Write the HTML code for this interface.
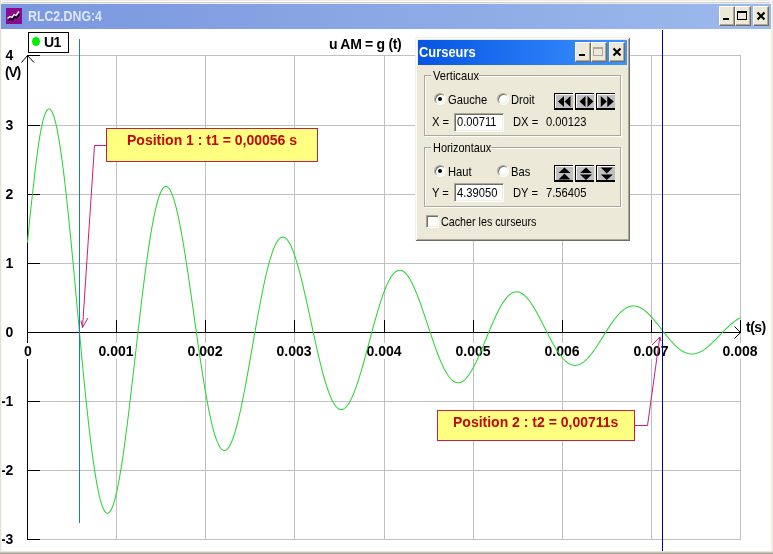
<!DOCTYPE html>
<html lang="fr">
<head>
<meta charset="utf-8">
<title>RLC2.DNG:4</title>
<style>
html,body{margin:0;padding:0;background:#fff;}
body{width:773px;height:554px;overflow:hidden;position:relative;font-family:"Liberation Sans",Arial,sans-serif;}
#win{position:absolute;left:0;top:0;width:773px;height:554px;background:#fff;overflow:hidden;will-change:transform;}
.abs{position:absolute;}
.plot{position:absolute;left:0;top:0;}
/* main window frame */
#bt0{left:0;top:0;width:773px;height:2px;background:linear-gradient(180deg,#ecebe3 50%,#fffffb 50%);}
#bt1{left:0;top:2px;width:773px;height:1px;background:#d6d1c5;}
#bt2{left:0;top:3px;width:773px;height:1px;background:#eaecf4;}
#bl{left:0;top:0;width:2px;height:554px;background:linear-gradient(90deg,#e2e0d6 50%,#f9f8f3 50%);}
#br{left:770px;top:0;width:3px;height:554px;background:linear-gradient(90deg,#fefefc 0,#fbfaf4 33%,#f7f5ec 34%,#f4f2e8 66%,#efecdf 67%,#ece9da 100%);}
#bb{left:0;top:551px;width:773px;height:3px;background:linear-gradient(180deg,#e8e6da 33.3%,#c6c3b5 33.3%,#c6c3b5 66.6%,#a9a698 66.6%);}
#tbar{left:1px;top:4px;width:770px;height:25px;background:linear-gradient(90deg,#7a96df,#9db9eb);}
#ticon{left:6px;top:8px;width:16px;height:16px;}
#ttext{left:28px;top:6px;font-weight:bold;font-size:14.5px;line-height:20px;color:#dfe8fb;white-space:nowrap;transform:scaleX(0.85);transform-origin:0 0;}
.cb{position:absolute;top:6px;width:16px;height:20px;background:#ece9d8;box-sizing:border-box;border:1px solid;border-color:#fff #716f64 #716f64 #fff;box-shadow:inset -1px -1px 0 #aca899;}
.cb svg{position:absolute;left:0;top:0;}
/* labels */
.yl{position:absolute;left:0;width:13px;text-align:right;font-weight:bold;font-size:14px;letter-spacing:-0.2px;line-height:15px;height:15px;color:#000;white-space:nowrap;}
.xl{position:absolute;top:343px;width:42px;height:16px;text-align:center;font-weight:bold;font-size:14px;line-height:16px;color:#000;white-space:nowrap;}
.xl span{background:#fff;}
.bl{position:absolute;font-weight:bold;font-size:14px;letter-spacing:-0.5px;line-height:15px;color:#000;white-space:nowrap;}
#legend{left:28px;top:32px;width:41px;height:21px;box-sizing:border-box;border:1px solid #000;background:#fff;}
#dot{left:32px;top:37px;width:8px;height:9px;border-radius:50%;background:#00f000;}
.note{position:absolute;box-sizing:border-box;border:1px solid #c02048;background:#ffff80;color:#c40808;font-weight:bold;font-size:14px;line-height:15px;white-space:nowrap;}
.note span{position:absolute;}
/* dialog */
#dlg{left:415px;top:37px;width:215px;height:204px;background:#ece9d8;box-shadow:inset 1px 1px 0 #f4f2e8,inset -1px -1px 0 #716f64,inset 2px 2px 0 #fff,inset -2px -2px 0 #aca899;font-size:11px;color:#000;}
#dlg .abs{white-space:nowrap;line-height:13px;}
#dlg .t{position:absolute;white-space:nowrap;font-size:13px;line-height:15px;transform:scaleX(0.86);transform-origin:0 0;}
#dtb{left:3px;top:3px;width:209px;height:25px;background:linear-gradient(90deg,#0654e3,#3d93ff);}
#dtt{left:4px;top:5px;color:#fff;font-weight:bold;font-size:14.5px;line-height:20px !important;transform:scaleX(0.89);transform-origin:0 0;}
.db{position:absolute;top:5px;width:16px;height:20px;background:#ece9d8;box-sizing:border-box;border:1px solid;border-color:#fff #716f64 #716f64 #fff;box-shadow:inset -1px -1px 0 #aca899;}
.db svg{position:absolute;left:0;top:0;}
.grp{position:absolute;box-sizing:border-box;border:1px solid #aca899;box-shadow:1px 1px 0 #fff,inset 1px 1px 0 #fff;}
.gl{position:absolute;background:#ece9d8;}
.radio{position:absolute;width:12px;height:12px;box-sizing:border-box;border-radius:50%;background:#fff;border:1px solid;border-color:#aca899 #fff #fff #aca899;box-shadow:inset 1px 1px 0 #716f64,inset -1px -1px 0 #f1efe2;}
.radio.on:after{content:"";position:absolute;left:3px;top:3px;width:4px;height:4px;border-radius:50%;background:#000;}
.inp{position:absolute;box-sizing:border-box;background:#fff;border:1px solid;border-color:#aca899 #fff #fff #aca899;box-shadow:inset 1px 1px 0 #716f64,inset -1px -1px 0 #f1efe2;}
.chk{position:absolute;width:13px;height:13px;box-sizing:border-box;background:#fff;border:1px solid;border-color:#aca899 #fff #fff #aca899;box-shadow:inset 1px 1px 0 #716f64,inset -1px -1px 0 #f1efe2;}
.ab{position:absolute;width:19px;height:17px;box-sizing:border-box;background:#c0c0c0;border-top:1px solid #000;border-left:1px solid #000;border-bottom:2px solid #000;box-shadow:inset 1px 1px 0 #fff;}
.ab svg{position:absolute;left:1px;top:1px;}
.ab path{fill:#000;}
</style>
</head>
<body>
<div id="win">
<svg class="plot" width="773" height="554" viewBox="0 0 773 554" shape-rendering="crispEdges">
<rect x="116" y="55" width="1" height="485" fill="#c0c0c0"/>
<rect x="205" y="55" width="1" height="485" fill="#c0c0c0"/>
<rect x="294" y="55" width="1" height="485" fill="#c0c0c0"/>
<rect x="384" y="55" width="1" height="485" fill="#c0c0c0"/>
<rect x="473" y="55" width="1" height="485" fill="#c0c0c0"/>
<rect x="562" y="55" width="1" height="485" fill="#c0c0c0"/>
<rect x="651" y="55" width="1" height="485" fill="#c0c0c0"/>
<rect x="740" y="55" width="1" height="485" fill="#c0c0c0"/>
<rect x="27" y="55" width="714" height="1" fill="#c0c0c0"/>
<rect x="27" y="125" width="714" height="1" fill="#c0c0c0"/>
<rect x="27" y="194" width="714" height="1" fill="#c0c0c0"/>
<rect x="27" y="263" width="714" height="1" fill="#c0c0c0"/>
<rect x="27" y="401" width="714" height="1" fill="#c0c0c0"/>
<rect x="27" y="470" width="714" height="1" fill="#c0c0c0"/>
<rect x="27" y="539" width="714" height="1" fill="#c0c0c0"/>
<rect x="27" y="55" width="1" height="485" fill="#000"/>
<rect x="27" y="332" width="714" height="1" fill="#000"/>
<rect x="27" y="55" width="13" height="1" fill="#000"/>
<rect x="27" y="125" width="13" height="1" fill="#000"/>
<rect x="27" y="194" width="13" height="1" fill="#000"/>
<rect x="27" y="263" width="13" height="1" fill="#000"/>
<rect x="27" y="332" width="13" height="1" fill="#000"/>
<rect x="27" y="401" width="13" height="1" fill="#000"/>
<rect x="27" y="470" width="13" height="1" fill="#000"/>
<rect x="27" y="539" width="13" height="1" fill="#000"/>
<rect x="116" y="320" width="1" height="13" fill="#000"/>
<rect x="205" y="320" width="1" height="13" fill="#000"/>
<rect x="294" y="320" width="1" height="13" fill="#000"/>
<rect x="384" y="320" width="1" height="13" fill="#000"/>
<rect x="473" y="320" width="1" height="13" fill="#000"/>
<rect x="562" y="320" width="1" height="13" fill="#000"/>
<rect x="651" y="320" width="1" height="13" fill="#000"/>
<rect x="740" y="320" width="1" height="13" fill="#000"/>
</svg>
<div class="yl" style="top:48px">4</div>
<div class="yl" style="top:118px">3</div>
<div class="yl" style="top:187px">2</div>
<div class="yl" style="top:256px">1</div>
<div class="yl" style="top:325px">0</div>
<div class="yl" style="top:394px">-1</div>
<div class="yl" style="top:463px">-2</div>
<div class="yl" style="top:532px">-3</div>
<div class="xl" style="left:7px"><span>0</span></div>
<div class="xl" style="left:95px"><span>0.001</span></div>
<div class="xl" style="left:184px"><span>0.002</span></div>
<div class="xl" style="left:273px"><span>0.003</span></div>
<div class="xl" style="left:363px"><span>0.004</span></div>
<div class="xl" style="left:452px"><span>0.005</span></div>
<div class="xl" style="left:541px"><span>0.006</span></div>
<div class="xl" style="left:630px"><span>0.007</span></div>
<div class="xl" style="left:719px"><span>0.008</span></div>
<div class="bl" style="left:5px;top:65px;letter-spacing:-1.2px">(V)</div>
<div class="bl" style="left:746px;top:320px">t(s)</div>
<div class="bl" style="left:329px;top:37px;letter-spacing:-0.3px">u AM = g (t)</div>
<svg class="plot" width="773" height="554" viewBox="0 0 773 554">
<path d="M21.5 62.5 L27.5 55.5 L34 62.5" fill="none" stroke="#000" stroke-width="1"/>
<path d="M734.5 326.5 L740.5 332.5 L734.5 338.5" fill="none" stroke="#000" stroke-width="1"/>
<polyline points="27.5,242.5 28.5,232.0 29.5,221.8 30.5,212.0 31.5,202.7 32.5,193.8 33.5,185.3 34.5,176.1 35.5,167.4 36.5,159.3 37.5,151.7 38.5,144.7 39.5,138.2 40.5,132.4 41.5,127.2 42.5,122.7 43.5,118.8 44.5,115.5 45.5,112.9 46.5,110.9 47.5,109.6 48.5,108.9 49.5,108.9 50.5,109.5 51.5,110.8 52.5,112.7 53.5,115.3 54.5,118.4 55.5,122.1 56.5,126.4 57.5,131.3 58.5,136.8 59.5,142.7 60.5,149.2 61.5,156.1 62.5,163.5 63.5,171.3 64.5,179.6 65.5,188.2 66.5,197.2 67.5,206.5 68.5,216.1 69.5,226.0 70.5,236.1 71.5,246.4 72.5,256.9 73.5,267.5 74.5,278.3 75.5,289.1 76.5,299.9 77.5,310.8 78.5,321.7 79.5,332.5 80.5,343.2 81.5,353.9 82.5,364.4 83.5,374.7 84.5,384.8 85.5,394.7 86.5,404.4 87.5,413.7 88.5,422.8 89.5,431.5 90.5,439.9 91.5,447.9 92.5,455.6 93.5,462.8 94.5,469.6 95.5,475.9 96.5,481.8 97.5,487.2 98.5,492.1 99.5,496.5 100.5,500.5 101.5,503.9 102.5,506.7 103.5,509.1 104.5,510.9 105.5,512.2 106.5,513.0 107.5,513.2 108.5,513.0 109.5,512.2 110.5,510.9 111.5,509.0 112.5,506.7 113.5,503.9 114.5,500.6 115.5,496.9 116.5,492.7 117.5,488.1 118.5,483.0 119.5,477.6 120.5,471.8 121.5,465.6 122.5,459.1 123.5,452.3 124.5,445.1 125.5,437.7 126.5,430.1 127.5,422.2 128.5,414.1 129.5,405.8 130.5,397.4 131.5,388.9 132.5,380.2 133.5,371.5 134.5,362.8 135.5,354.0 136.5,345.2 137.5,336.4 138.5,327.7 139.5,319.1 140.5,310.6 141.5,302.2 142.5,293.9 143.5,285.8 144.5,277.9 145.5,270.2 146.5,262.8 147.5,255.6 148.5,248.7 149.5,242.1 150.5,235.8 151.5,229.8 152.5,224.2 153.5,218.9 154.5,214.0 155.5,209.4 156.5,205.3 157.5,201.5 158.5,198.1 159.5,195.2 160.5,192.7 161.5,190.6 162.5,188.9 163.5,187.7 164.5,186.9 165.5,186.5 166.5,186.5 167.5,187.0 168.5,187.8 169.5,189.1 170.5,190.8 171.5,192.9 172.5,195.4 173.5,198.2 174.5,201.5 175.5,205.1 176.5,209.0 177.5,213.2 178.5,217.8 179.5,222.6 180.5,227.8 181.5,233.2 182.5,238.9 183.5,244.7 184.5,250.8 185.5,257.1 186.5,263.6 187.5,270.2 188.5,277.0 189.5,283.8 190.5,290.8 191.5,297.8 192.5,304.9 193.5,311.9 194.5,319.1 195.5,326.1 196.5,333.2 197.5,340.2 198.5,347.1 199.5,354.0 200.5,360.7 201.5,367.3 202.5,373.8 203.5,380.0 204.5,386.1 205.5,392.0 206.5,397.7 207.5,403.2 208.5,408.4 209.5,413.3 210.5,418.0 211.5,422.4 212.5,426.5 213.5,430.4 214.5,433.9 215.5,437.0 216.5,439.9 217.5,442.4 218.5,444.6 219.5,446.4 220.5,448.0 221.5,449.1 222.5,449.9 223.5,450.4 224.5,450.5 225.5,450.3 226.5,449.8 227.5,448.9 228.5,447.6 229.5,446.1 230.5,444.2 231.5,442.1 232.5,439.6 233.5,436.8 234.5,433.8 235.5,430.5 236.5,426.9 237.5,423.1 238.5,419.0 239.5,414.7 240.5,410.3 241.5,405.6 242.5,400.7 243.5,395.7 244.5,390.5 245.5,385.3 246.5,379.8 247.5,374.3 248.5,368.8 249.5,363.1 250.5,357.4 251.5,351.7 252.5,345.9 253.5,340.2 254.5,334.5 255.5,328.8 256.5,323.2 257.5,317.6 258.5,312.1 259.5,306.8 260.5,301.5 261.5,296.4 262.5,291.4 263.5,286.5 264.5,281.8 265.5,277.3 266.5,273.0 267.5,268.9 268.5,265.1 269.5,261.4 270.5,258.0 271.5,254.8 272.5,251.8 273.5,249.2 274.5,246.7 275.5,244.6 276.5,242.7 277.5,241.1 278.5,239.7 279.5,238.7 280.5,237.9 281.5,237.4 282.5,237.1 283.5,237.2 284.5,237.5 285.5,238.1 286.5,239.0 287.5,240.1 288.5,241.5 289.5,243.1 290.5,245.0 291.5,247.2 292.5,249.5 293.5,252.1 294.5,254.9 295.5,257.9 296.5,261.1 297.5,264.5 298.5,268.0 299.5,271.7 300.5,275.6 301.5,279.6 302.5,283.7 303.5,287.9 304.5,292.3 305.5,296.7 306.5,301.2 307.5,305.7 308.5,310.3 309.5,314.9 310.5,319.5 311.5,324.2 312.5,328.8 313.5,333.4 314.5,338.0 315.5,342.5 316.5,347.0 317.5,351.4 318.5,355.7 319.5,359.9 320.5,363.9 321.5,367.9 322.5,371.8 323.5,375.5 324.5,379.0 325.5,382.4 326.5,385.6 327.5,388.6 328.5,391.5 329.5,394.2 330.5,396.6 331.5,398.9 332.5,401.0 333.5,402.8 334.5,404.4 335.5,405.8 336.5,407.0 337.5,408.0 338.5,408.7 339.5,409.2 340.5,409.5 341.5,409.6 342.5,409.4 343.5,409.0 344.5,408.4 345.5,407.6 346.5,406.6 347.5,405.3 348.5,403.9 349.5,402.3 350.5,400.4 351.5,398.4 352.5,396.2 353.5,393.9 354.5,391.4 355.5,388.7 356.5,385.9 357.5,383.0 358.5,379.9 359.5,376.7 360.5,373.4 361.5,370.1 362.5,366.6 363.5,363.1 364.5,359.5 365.5,355.8 366.5,352.1 367.5,348.4 368.5,344.7 369.5,340.9 370.5,337.2 371.5,333.4 372.5,329.7 373.5,326.0 374.5,322.4 375.5,318.8 376.5,315.3 377.5,311.9 378.5,308.6 379.5,305.3 380.5,302.2 381.5,299.1 382.5,296.2 383.5,293.4 384.5,290.7 385.5,288.2 386.5,285.8 387.5,283.6 388.5,281.5 389.5,279.6 390.5,277.9 391.5,276.3 392.5,274.9 393.5,273.7 394.5,272.7 395.5,271.8 396.5,271.2 397.5,270.7 398.5,270.4 399.5,270.2 400.5,270.3 401.5,270.5 402.5,270.9 403.5,271.5 404.5,272.3 405.5,273.2 406.5,274.3 407.5,275.5 408.5,276.9 409.5,278.5 410.5,280.2 411.5,282.0 412.5,284.0 413.5,286.1 414.5,288.3 415.5,290.6 416.5,293.1 417.5,295.6 418.5,298.2 419.5,300.9 420.5,303.7 421.5,306.5 422.5,309.4 423.5,312.3 424.5,315.3 425.5,318.3 426.5,321.3 427.5,324.3 428.5,327.4 429.5,330.4 430.5,333.4 431.5,336.4 432.5,339.3 433.5,342.2 434.5,345.1 435.5,347.9 436.5,350.6 437.5,353.3 438.5,355.9 439.5,358.4 440.5,360.8 441.5,363.1 442.5,365.3 443.5,367.4 444.5,369.4 445.5,371.2 446.5,372.9 447.5,374.5 448.5,376.0 449.5,377.3 450.5,378.5 451.5,379.6 452.5,380.5 453.5,381.2 454.5,381.8 455.5,382.3 456.5,382.6 457.5,382.8 458.5,382.8 459.5,382.7 460.5,382.4 461.5,382.0 462.5,381.5 463.5,380.8 464.5,380.0 465.5,379.0 466.5,377.9 467.5,376.7 468.5,375.4 469.5,374.0 470.5,372.4 471.5,370.8 472.5,369.0 473.5,367.2 474.5,365.3 475.5,363.3 476.5,361.2 477.5,359.0 478.5,356.8 479.5,354.5 480.5,352.2 481.5,349.9 482.5,347.5 483.5,345.1 484.5,342.6 485.5,340.2 486.5,337.7 487.5,335.3 488.5,332.9 489.5,330.4 490.5,328.0 491.5,325.7 492.5,323.4 493.5,321.1 494.5,318.8 495.5,316.7 496.5,314.5 497.5,312.5 498.5,310.5 499.5,308.6 500.5,306.8 501.5,305.1 502.5,303.4 503.5,301.9 504.5,300.4 505.5,299.1 506.5,297.9 507.5,296.7 508.5,295.7 509.5,294.8 510.5,294.1 511.5,293.4 512.5,292.8 513.5,292.4 514.5,292.1 515.5,291.9 516.5,291.8 517.5,291.9 518.5,292.0 519.5,292.3 520.5,292.7 521.5,293.2 522.5,293.8 523.5,294.6 524.5,295.4 525.5,296.3 526.5,297.3 527.5,298.4 528.5,299.7 529.5,301.0 530.5,302.3 531.5,303.8 532.5,305.3 533.5,306.9 534.5,308.6 535.5,310.3 536.5,312.0 537.5,313.9 538.5,315.7 539.5,317.6 540.5,319.5 541.5,321.5 542.5,323.4 543.5,325.4 544.5,327.4 545.5,329.3 546.5,331.3 547.5,333.3 548.5,335.2 549.5,337.2 550.5,339.0 551.5,340.9 552.5,342.7 553.5,344.5 554.5,346.3 555.5,347.9 556.5,349.6 557.5,351.1 558.5,352.6 559.5,354.1 560.5,355.4 561.5,356.7 562.5,357.9 563.5,359.0 564.5,360.0 565.5,361.0 566.5,361.9 567.5,362.6 568.5,363.3 569.5,363.9 570.5,364.4 571.5,364.8 572.5,365.0 573.5,365.2 574.5,365.3 575.5,365.4 576.5,365.3 577.5,365.1 578.5,364.8 579.5,364.4 580.5,364.0 581.5,363.4 582.5,362.8 583.5,362.1 584.5,361.3 585.5,360.4 586.5,359.5 587.5,358.5 588.5,357.4 589.5,356.2 590.5,355.0 591.5,353.8 592.5,352.4 593.5,351.1 594.5,349.7 595.5,348.2 596.5,346.7 597.5,345.2 598.5,343.7 599.5,342.1 600.5,340.5 601.5,339.0 602.5,337.4 603.5,335.8 604.5,334.2 605.5,332.6 606.5,331.0 607.5,329.4 608.5,327.9 609.5,326.4 610.5,324.9 611.5,323.4 612.5,322.0 613.5,320.6 614.5,319.3 615.5,318.0 616.5,316.8 617.5,315.6 618.5,314.5 619.5,313.4 620.5,312.4 621.5,311.5 622.5,310.6 623.5,309.8 624.5,309.1 625.5,308.4 626.5,307.8 627.5,307.3 628.5,306.9 629.5,306.6 630.5,306.3 631.5,306.1 632.5,306.0 633.5,305.9 634.5,306.0 635.5,306.1 636.5,306.3 637.5,306.5 638.5,306.9 639.5,307.3 640.5,307.8 641.5,308.3 642.5,308.9 643.5,309.6 644.5,310.3 645.5,311.1 646.5,312.0 647.5,312.9 648.5,313.8 649.5,314.9 650.5,315.9 651.5,317.0 652.5,318.1 653.5,319.3 654.5,320.4 655.5,321.7 656.5,322.9 657.5,324.2 658.5,325.4 659.5,326.7 660.5,328.0 661.5,329.3 662.5,330.6 663.5,331.9 664.5,333.1 665.5,334.4 666.5,335.7 667.5,336.9 668.5,338.1 669.5,339.3 670.5,340.5 671.5,341.6 672.5,342.7 673.5,343.7 674.5,344.8 675.5,345.7 676.5,346.7 677.5,347.5 678.5,348.4 679.5,349.2 680.5,349.9 681.5,350.6 682.5,351.2 683.5,351.7 684.5,352.2 685.5,352.7 686.5,353.0 687.5,353.3 688.5,353.6 689.5,353.8 690.5,353.9 691.5,354.0 692.5,354.0 693.5,353.9 694.5,353.8 695.5,353.6 696.5,353.3 697.5,353.0 698.5,352.7 699.5,352.2 700.5,351.8 701.5,351.3 702.5,350.7 703.5,350.1 704.5,349.4 705.5,348.7 706.5,347.9 707.5,347.1 708.5,346.3 709.5,345.4 710.5,344.5 711.5,343.6 712.5,342.7 713.5,341.7 714.5,340.7 715.5,339.7 716.5,338.7 717.5,337.7 718.5,336.6 719.5,335.6 720.5,334.5 721.5,333.5 722.5,332.4 723.5,331.4 724.5,330.4 725.5,329.4 726.5,328.4 727.5,327.4 728.5,326.5 729.5,325.6 730.5,324.7 731.5,323.8 732.5,323.0 733.5,322.2 734.5,321.4 735.5,320.7 736.5,320.0 737.5,319.3 738.5,318.7 739.5,318.1 740.5,317.6" fill="none" stroke="#2cd436" stroke-width="1.05" stroke-linejoin="round"/>
<rect x="79" y="39" width="1" height="484" fill="#1c78d2" shape-rendering="crispEdges"/>
<rect x="662" y="30" width="1" height="521" fill="#00008c" shape-rendering="crispEdges"/>
<path d="M106 145.5 L94.5 145.5 L82.5 327.5 M81 320.5 L82.5 327.5 L88 318" fill="none" stroke="#c81e78" stroke-width="1"/>
<path d="M635 425.5 L647.5 425.5 L659.8 337 M652 345 L659.8 337 L661 341" fill="none" stroke="#c81e78" stroke-width="1"/>
</svg>
<div id="legend" class="abs"></div>
<div id="dot" class="abs"></div>
<div class="bl" style="left:44px;top:35px">U1</div>

<div class="note" style="left:106px;top:128px;width:212px;height:34px"><span style="left:20px;top:4px">Position 1 : t1 = 0,00056 s</span></div>
<div class="note" style="left:437px;top:410px;width:198px;height:31px"><span style="left:15px;top:4px">Position 2 : t2 = 0,00711s</span></div>

<!-- main window frame -->
<div id="bt0" class="abs"></div><div id="bt1" class="abs"></div><div id="bt2" class="abs"></div>
<div id="bl" class="abs"></div><div id="br" class="abs"></div><div id="bb" class="abs"></div>
<div id="tbar" class="abs"></div>
<svg id="ticon" class="abs" viewBox="0 0 16 16" shape-rendering="crispEdges">
<rect width="16" height="16" fill="#8c0a8f"/>
<path d="M2 11.5 L4 9.5 L6 10.5 L8 7.5 L10 8.5 L13 4.5" transform="translate(0.6,1.2)" fill="none" stroke="#000" stroke-width="1.6" shape-rendering="auto"/>
<path d="M1.5 10.5 L4 8.5 L6 9.5 L8 6.5 L10 7.5 L13 3.5" fill="none" stroke="#fff" stroke-width="1.3" shape-rendering="auto"/>
</svg>
<div id="ttext" class="abs">RLC2.DNG:4</div>
<div class="cb" style="left:719px"><svg width="14" height="18"><rect x="3" y="11" width="6" height="2" fill="#000"/></svg></div>
<div class="cb" style="left:735px"><svg width="14" height="18"><path d="M1.5 4.5 H10.5 V12.5 H1.5 Z M1.5 5.5 H10.5" fill="none" stroke="#000" stroke-width="1" shape-rendering="crispEdges"/></svg></div>
<div class="cb" style="left:753px"><svg width="14" height="18"><path d="M3.5 5.5 L10.5 12.5 M10.5 5.5 L3.5 12.5" fill="none" stroke="#000" stroke-width="2.1"/></svg></div>

<!-- cursors dialog -->
<div id="dlg" class="abs">
 <div id="dtb" class="abs"></div>
 <div id="dtt" class="abs">Curseurs</div>
 <div class="db" style="left:160px"><svg width="14" height="18"><rect x="3" y="11" width="6" height="2" fill="#000"/></svg></div>
 <div class="db" style="left:176px"><svg width="14" height="18"><path d="M1.5 4.5 H10.5 V12.5 H1.5 Z M1.5 5.5 H10.5" fill="none" stroke="#aca899" stroke-width="1" shape-rendering="crispEdges"/></svg></div>
 <div class="db" style="left:194px"><svg width="14" height="18"><path d="M3.5 5.5 L10.5 12.5 M10.5 5.5 L3.5 12.5" fill="none" stroke="#000" stroke-width="2.1"/></svg></div>

 <div class="grp" style="left:9px;top:38px;width:197px;height:61px"></div>
 <div class="gl" style="left:16px;top:31px;width:48px;height:14px"></div><div class="t" style="left:18px;top:31px">Verticaux</div>
 <div class="radio on" style="left:19px;top:56px"></div><div class="t" style="left:33px;top:55px">Gauche</div>
 <div class="radio" style="left:82px;top:56px"></div><div class="t" style="left:96px;top:55px">Droit</div>
 <div class="t" style="left:17px;top:77px">X =</div>
 <div class="inp" style="left:39px;top:76px;width:50px;height:19px"></div><div class="t" style="left:42px;top:77px">0.00711</div>
 <div class="t" style="left:98px;top:77px">DX =</div><div class="t" style="left:131px;top:77px">0.00123</div>

 <div class="grp" style="left:9px;top:110px;width:197px;height:60px"></div>
 <div class="gl" style="left:16px;top:103px;width:60px;height:14px"></div><div class="t" style="left:17.5px;top:103px;transform:scaleX(0.84)">Horizontaux</div>
 <div class="radio on" style="left:19px;top:128px"></div><div class="t" style="left:33px;top:127px">Haut</div>
 <div class="radio" style="left:82px;top:128px"></div><div class="t" style="left:96px;top:127px">Bas</div>
 <div class="t" style="left:17px;top:148px">Y =</div>
 <div class="inp" style="left:39px;top:146px;width:50px;height:19px"></div><div class="t" style="left:42px;top:148px">4.39050</div>
 <div class="t" style="left:98px;top:148px">DY =</div><div class="t" style="left:131px;top:148px">7.56405</div>

 <div class="chk" style="left:11px;top:178px"></div><div class="t" style="left:26px;top:177px;transform:scaleX(0.825)">Cacher les curseurs</div>
 <div class="ab" style="left:139px;top:56px"><svg width="17" height="14" viewBox="0 0 17 14"><path d="M2 6.5 L8 1 V12 Z M8.5 6.5 L14.5 1 V12 Z"/></svg></div><div class="ab" style="left:160px;top:56px"><svg width="17" height="14" viewBox="0 0 17 14"><path d="M2.5 6.5 L8.5 1 V12 Z M16.5 6.5 L10.5 1 V12 Z"/></svg></div><div class="ab" style="left:181px;top:56px"><svg width="17" height="14" viewBox="0 0 17 14"><path d="M8.8 6.5 L2.8 1 V12 Z M15.8 6.5 L9.3 1 V12 Z"/></svg></div><div class="ab" style="left:139px;top:128px"><svg width="17" height="14" viewBox="0 0 17 14"><path d="M8.5 0.5 L14.5 6 H2.5 Z M8.5 6.5 L14.5 12.5 H2.5 Z"/></svg></div><div class="ab" style="left:160px;top:128px"><svg width="17" height="14" viewBox="0 0 17 14"><path d="M9 0.5 L15 6 H3 Z M9 13 L15 7.5 H3 Z"/></svg></div><div class="ab" style="left:181px;top:128px"><svg width="17" height="14" viewBox="0 0 17 14"><path d="M8.8 6.5 L14.8 0.5 H2.8 Z M8.8 13 L14.8 7.5 H2.8 Z"/></svg></div>
</div>
</div>
</body>
</html>
